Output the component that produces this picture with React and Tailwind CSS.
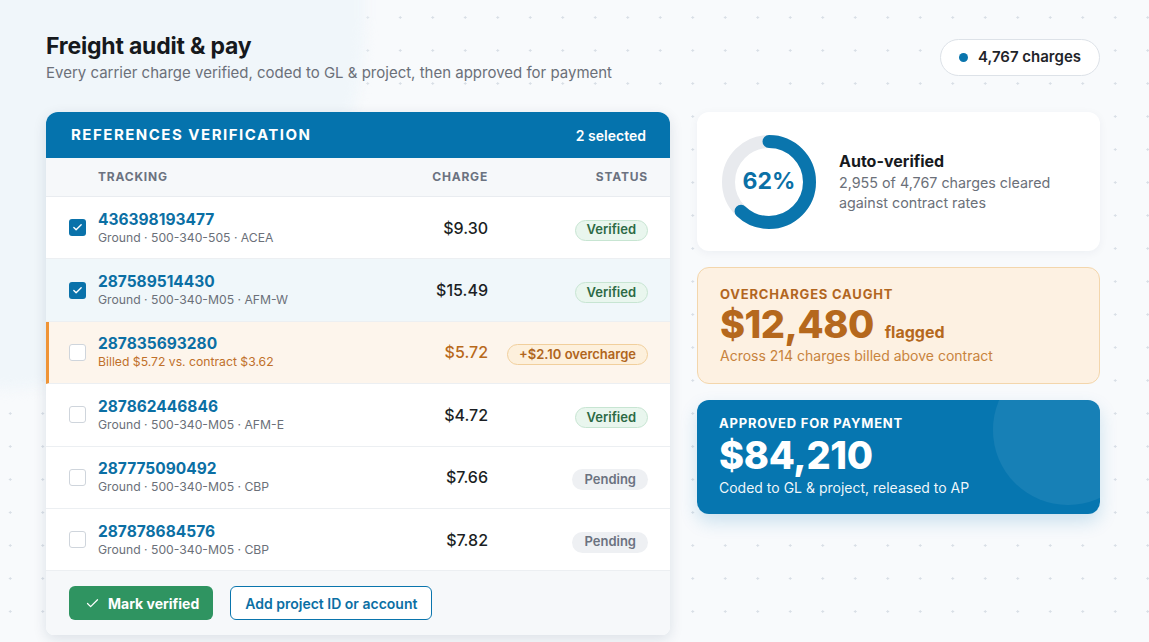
import { Check } from 'lucide-react'

const rows = [
  { id: '436398193477', sub: 'Ground · 500-340-505 · ACEA', charge: '$9.30', status: 'verified', checked: true },
  { id: '287589514430', sub: 'Ground · 500-340-M05 · AFM-W', charge: '$15.49', status: 'verified', checked: true, tint: true },
  { id: '287835693280', sub: 'Billed $5.72 vs. contract $3.62', charge: '$5.72', status: 'over', over: true },
  { id: '287862446846', sub: 'Ground · 500-340-M05 · AFM-E', charge: '$4.72', status: 'verified' },
  { id: '287775090492', sub: 'Ground · 500-340-M05 · CBP', charge: '$7.66', status: 'pending' },
  { id: '287878684576', sub: 'Ground · 500-340-M05 · CBP', charge: '$7.82', status: 'pending' },
]

function StatusPill({ status }) {
  if (status === 'verified') {
    return (
      <span className="inline-flex h-[21px] items-center rounded-full border border-[#c7e5d2] bg-[#e9f6ee] px-[11px] text-[13px] font-semibold text-[#2c6a45]">
        Verified
      </span>
    )
  }
  if (status === 'over') {
    return (
      <span className="inline-flex h-[21px] items-center rounded-full border border-[#f1cf9c] bg-[#fdf0dc] px-[11px] text-[13px] font-semibold text-[#b0651c]">
        +$2.10 overcharge
      </span>
    )
  }
  return (
    <span className="inline-flex h-[21px] items-center rounded-full bg-[#eef0f3] px-[12px] text-[13px] font-semibold text-[#6b7280]">
      Pending
    </span>
  )
}

function Checkbox({ checked }) {
  if (checked) {
    return (
      <span className="flex h-[17px] w-[17px] shrink-0 items-center justify-center rounded-[3px] bg-[#0a72aa]">
        <Check className="h-[11px] w-[11px] text-white" strokeWidth={3} />
      </span>
    )
  }
  return <span className="h-[17px] w-[17px] shrink-0 rounded-[3px] border border-[#cfd5dc] bg-white" />
}

function Donut() {
  const r = 40.5
  const c = 2 * Math.PI * r
  return (
    <div className="relative h-[94px] w-[94px] shrink-0">
      <svg width="94" height="94" viewBox="0 0 94 94" className="-rotate-90">
        <circle cx="47" cy="47" r={r} fill="none" stroke="#e8eaee" strokeWidth="13" />
        <circle
          cx="47"
          cy="47"
          r={r}
          fill="none"
          stroke="#0a75ad"
          strokeWidth="13"
          strokeLinecap="round"
          strokeDasharray={`${c * 0.62} ${c}`}
        />
      </svg>
      <div className="absolute inset-0 flex items-center justify-center text-[23px] font-bold text-[#0a70a6]">62%</div>
    </div>
  )
}

export default function App() {
  return (
    <div
      className="relative min-h-[642px] w-full overflow-hidden bg-[#f8fafc] bg-[radial-gradient(#d9dfe6_1px,transparent_1.2px)] bg-[size:32.5px_33px] bg-[position:-6px_1px] font-['Inter','Noto_Sans',sans-serif] text-[#1f2937]"
    >
      {/* soft top-left glow */}
      <div className="pointer-events-none absolute -left-[380px] -top-[400px] h-[790px] w-[745px] rounded-full bg-[#f0f6fa] blur-[6px]" />

      <div className="relative px-[46px] pt-[31px]">
        {/* Header */}
        <div className="flex items-start justify-between">
          <div>
            <h1 className="text-[23px] font-bold leading-[30px] tracking-[-0.2px] text-[#16191d]">Freight audit &amp; pay</h1>
            <p className="mt-[1px] text-[15px] leading-[22px] text-[#6b7079]">
              Every carrier charge verified, coded to GL &amp; project, then approved for payment
            </p>
          </div>
          <div className="mr-[3px] mt-[8px] flex h-[37px] items-center gap-[10px] rounded-full border border-[#dde2e8] bg-white pl-[18px] pr-[18px] text-[15px] font-semibold text-[#1f2429]">
            <span className="h-[9px] w-[9px] rounded-full bg-[#0a75ad]" />
            4,767 charges
          </div>
        </div>

        <div className="mt-[28px] flex gap-[27px]">
          {/* Table card */}
          <div className="w-[624px] overflow-hidden rounded-t-[12px] rounded-b-[8px] bg-white shadow-[0_4px_14px_rgba(15,40,70,0.12)]">
            <div className="flex h-[46px] items-center justify-between bg-[#0573ad] pl-[25px] pr-[24px] text-white">
              <span className="text-[15px] font-bold tracking-[1.5px]">REFERENCES VERIFICATION</span>
              <span className="text-[14px] font-semibold">2 selected</span>
            </div>
            <div className="flex h-[39px] items-center border-b border-[#e9ecf0] bg-[#f6f8fa] pl-[52px] pr-[22px] text-[12px] font-bold tracking-[0.8px] text-[#6b7280]">
              <span className="flex-1">TRACKING</span>
              <span className="w-[110px] text-right">CHARGE</span>
              <span className="w-[160px] text-right">STATUS</span>
            </div>
            {rows.map(row => (
              <div
                key={row.id}
                className={
                  'flex h-[62.4px] items-center gap-[12px] border-b border-[#eceff2] pr-[22px] ' +
                  (row.over
                    ? 'border-l-[3px] border-l-[#ef9436] bg-[#fdf5ec] pl-[20px]'
                    : row.tint
                      ? 'bg-[#f0f7fa] pl-[23px]'
                      : 'bg-white pl-[23px]')
                }
              >
                <Checkbox checked={row.checked} />
                <div className="flex-1">
                  <div className="text-[15.5px] font-bold leading-[20px] text-[#0b6fa4]">{row.id}</div>
                  <div className={'text-[12.2px] leading-[16px] ' + (row.over ? 'text-[#c0702a]' : 'text-[#6b7079]')}>
                    {row.sub}
                  </div>
                </div>
                <div
                  className={
                    'w-[110px] text-right text-[16px] font-medium ' + (row.over ? 'font-bold text-[#b8691b]' : 'text-[#1b1f24]')
                  }
                >
                  {row.charge}
                </div>
                <div className="flex w-[148px] justify-end pt-[5px]">
                  <StatusPill status={row.status} />
                </div>
              </div>
            ))}
            <div className="flex h-[64px] items-center gap-[17px] bg-[#f6f8fa] px-[23px]">
              <button className="flex h-[34px] items-center gap-[8px] rounded-[6px] bg-[#2f9461] pl-[16px] pr-[14px] text-[14px] font-bold text-white">
                <Check className="h-[15px] w-[15px]" strokeWidth={2} />
                Mark verified
              </button>
              <button className="flex h-[34px] items-center rounded-[6px] border border-[#0a75ad] bg-white px-[14px] text-[14px] font-semibold text-[#0b6fa4]">
                Add project ID or account
              </button>
            </div>
          </div>

          {/* Right column */}
          <div className="flex w-[403px] flex-col gap-[16px]">
            <div className="flex h-[139px] items-center gap-[23px] rounded-[12px] bg-white pl-[25px] shadow-[0_2px_10px_rgba(15,40,70,0.05)]">
              <Donut />
              <div>
                <div className="text-[16px] font-bold leading-[22px] text-[#16191d]">Auto-verified</div>
                <div className="mt-[1px] text-[14.3px] leading-[20px] text-[#6b7079]">
                  2,955 of 4,767 charges cleared
                  <br />
                  against contract rates
                </div>
              </div>
            </div>

            <div className="h-[117px] rounded-[12px] border border-[#f3d6ac] bg-[#fdf1e2] px-[22px] pt-[17px]">
              <div className="text-[13px] font-bold leading-[18px] tracking-[0.8px] text-[#b2661f]">OVERCHARGES CAUGHT</div>
              <div className="flex items-baseline gap-[11px]">
                <span className="text-[38px] font-extrabold leading-[43px] tracking-[-0.5px] text-[#b5681d]">$12,480</span>
                <span className="text-[16px] font-bold text-[#b5681d]">flagged</span>
              </div>
              <div className="text-[14px] leading-[20px] text-[#c8833d]">Across 214 charges billed above contract</div>
            </div>

            <div className="relative h-[114px] overflow-hidden rounded-[12px] bg-[#0676b0] px-[22px] pt-[14px] text-white shadow-[0_8px_18px_rgba(6,118,176,0.18)]">
              <div className="absolute -right-[43px] -top-[45px] h-[150px] w-[150px] rounded-full bg-white/[0.07]" />
              <div className="relative text-[13px] font-bold leading-[18px] tracking-[0.8px]">APPROVED FOR PAYMENT</div>
              <div className="relative text-[38px] font-extrabold leading-[46px] tracking-[-0.3px]">$84,210</div>
              <div className="relative text-[14px] leading-[20px] text-white/95">Coded to GL &amp; project, released to AP</div>
            </div>
          </div>
        </div>
      </div>
    </div>
  )
}
